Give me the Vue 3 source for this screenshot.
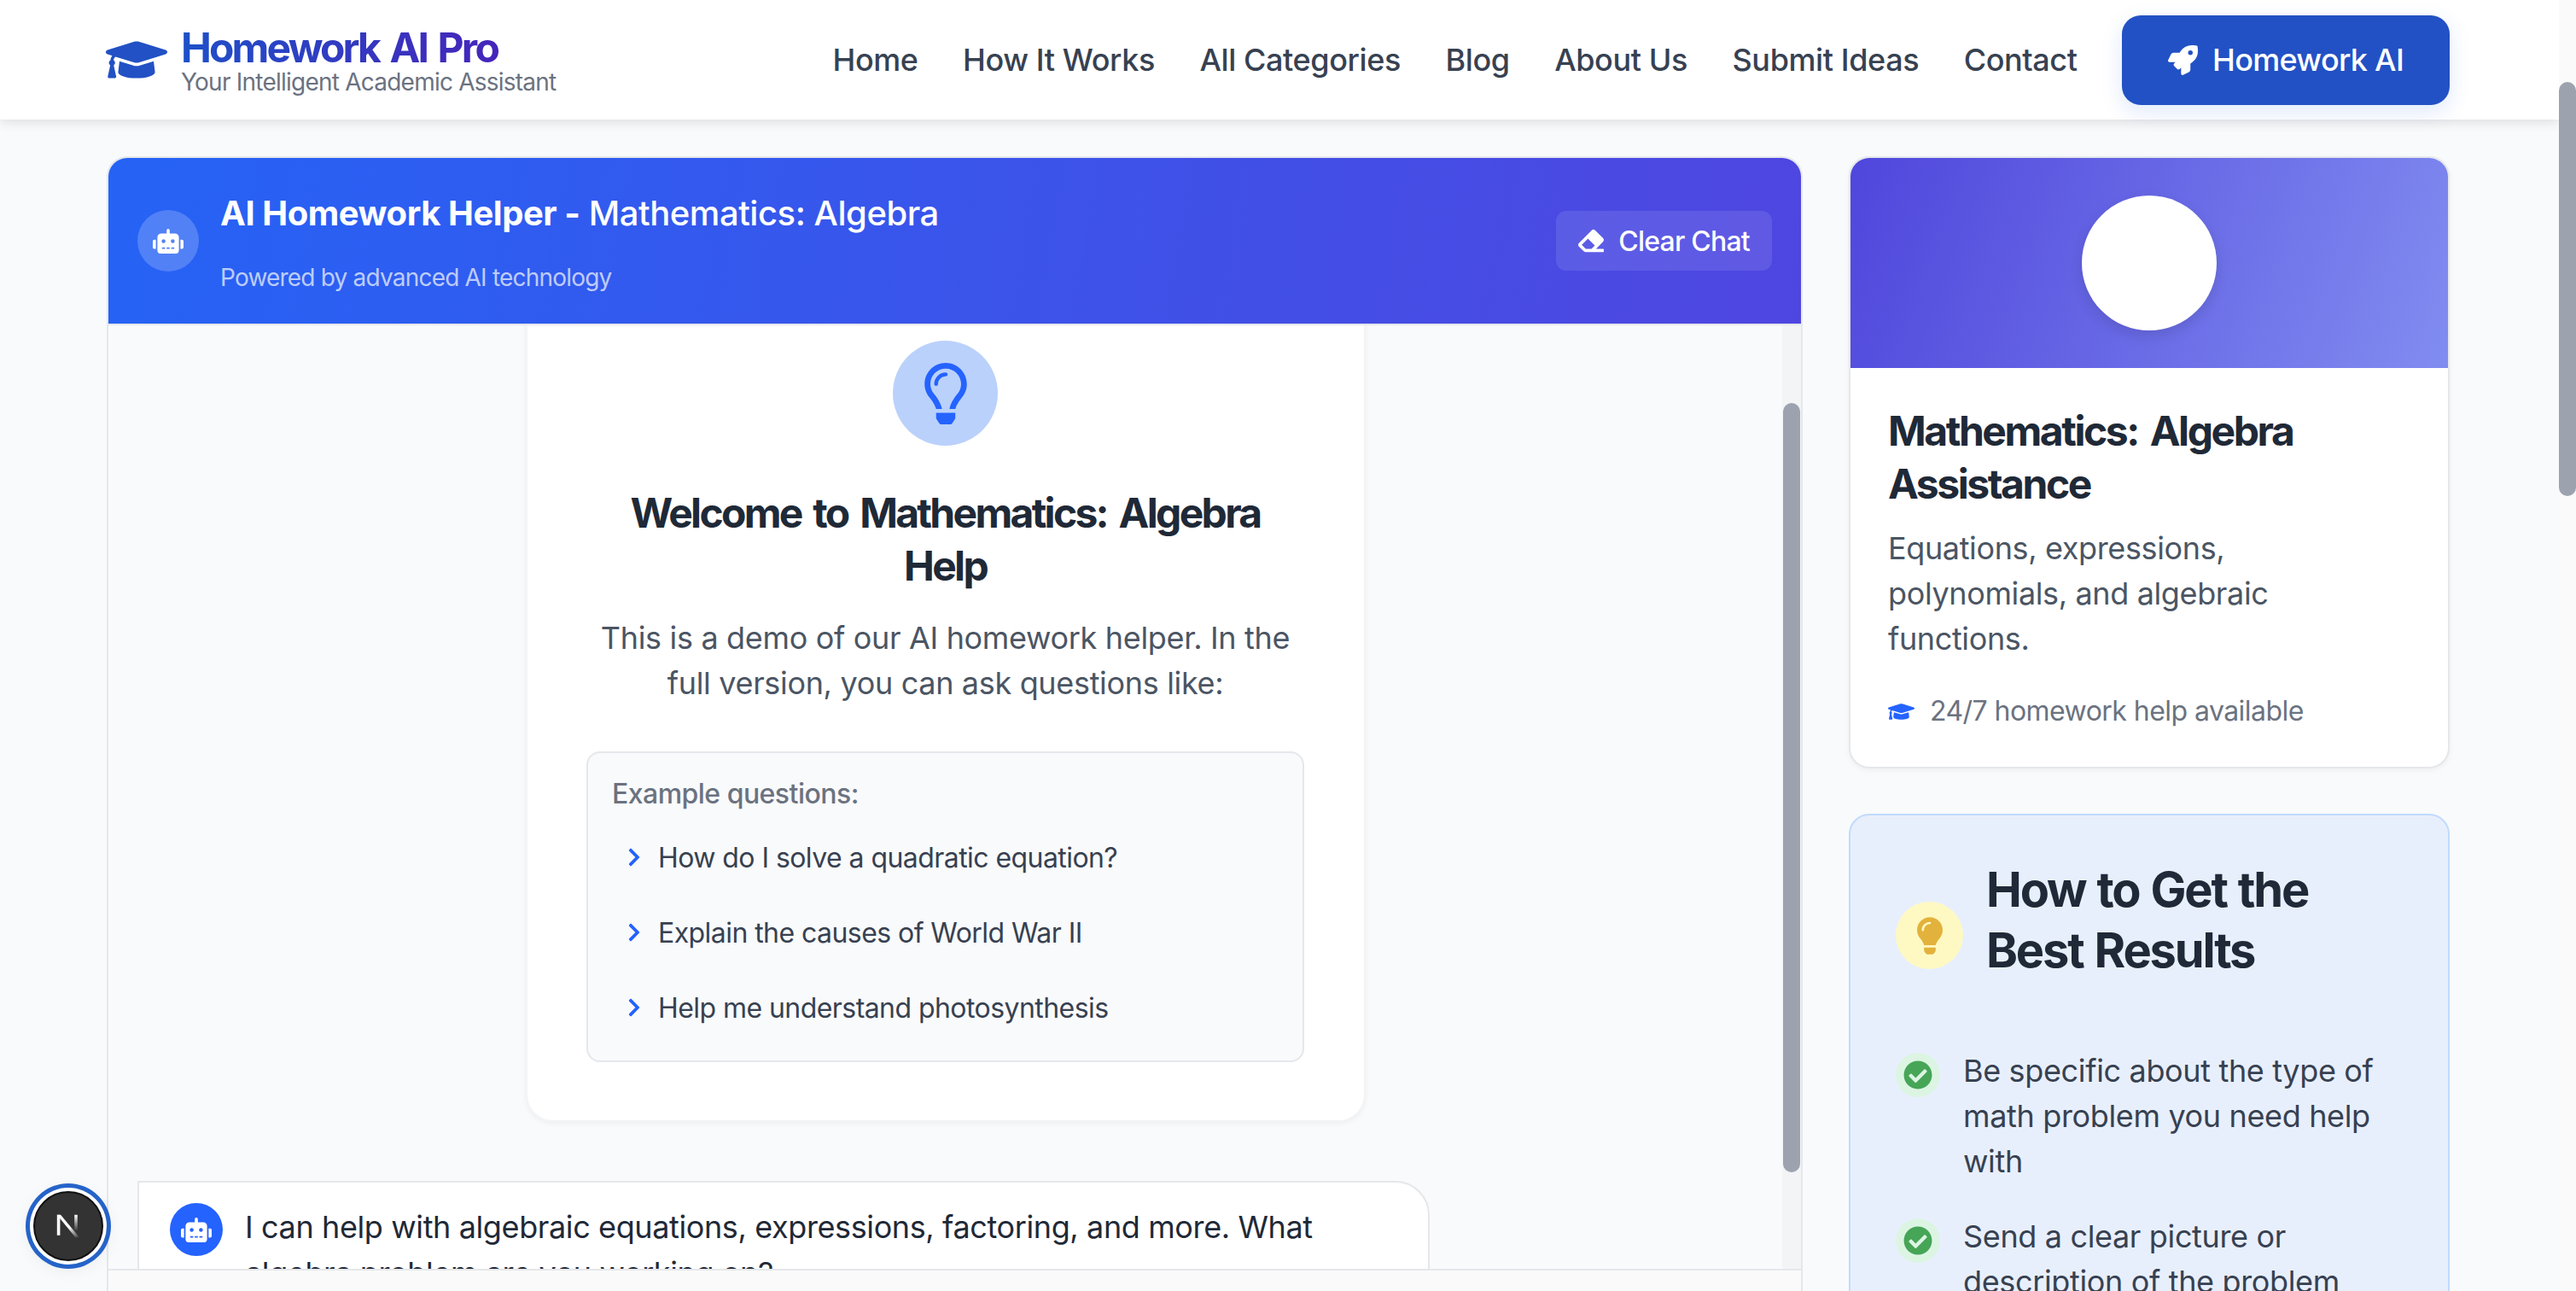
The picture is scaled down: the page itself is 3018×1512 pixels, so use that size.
<script setup>
// 页面静态数据
const navLinks = ['Home', 'How It Works', 'All Categories', 'Blog', 'About Us', 'Submit Ideas', 'Contact']

const examples = [
  'How do I solve a quadratic equation?',
  'Explain the causes of World War II',
  'Help me understand photosynthesis',
]

const tips = [
  'Be specific about the type of math problem you need help with',
  'Send a clear picture or description of the problem',
]

// ---- 图标路径 ----
const icons = {
  cap: 'M622.34 153.2L343.4 67.5c-15.2-4.67-31.6-4.67-46.79 0L17.66 153.2c-23.54 7.23-23.54 38.36 0 45.59l48.63 14.94c-10.67 13.19-17.23 29.28-17.88 46.9C38.78 266.15 32 276.11 32 288c0 10.78 5.68 19.85 13.86 25.65L20.33 428.53C18.11 438.52 25.71 448 35.94 448h56.11c10.24 0 17.84-9.48 15.62-19.47L82.14 313.65C90.32 307.85 96 298.78 96 288c0-11.57-6.47-21.25-15.66-26.87.76-15.02 8.44-28.3 20.69-36.72L296.6 284.5c9.06 2.78 26.44 6.25 46.79 0l278.95-85.7c23.55-7.24 23.55-38.36 0-45.6zM352.79 315.09c-28.53 8.76-52.84 3.92-65.59 0l-145.02-44.55L128 384c0 35.35 85.96 64 192 64s192-28.65 192-64l-14.18-113.47-145.03 44.56z',
  robot: 'M32,224H64V416H32A31.96166,31.96166,0,0,1,0,384V256A31.96166,31.96166,0,0,1,32,224Zm512-48V448a64.06328,64.06328,0,0,1-64,64H160a64.06328,64.06328,0,0,1-64-64V176a79.974,79.974,0,0,1,80-80H288V32a32,32,0,0,1,64,0V96H464A79.974,79.974,0,0,1,544,176ZM264,256a40,40,0,1,0-40,40A39.997,39.997,0,0,0,264,256Zm-8,128H192v32h64Zm96,0H288v32h64ZM456,256a40,40,0,1,0-40,40A39.997,39.997,0,0,0,456,256Zm-8,128H384v32h64ZM640,256V384a31.96166,31.96166,0,0,1-32,32H576V224h32A31.96166,31.96166,0,0,1,640,256Z',
  rocket: 'M505.12019,19.09375c-1.18945-5.53125-6.65819-11-12.207-12.1875C460.716,0,435.507,0,410.40747,0,307.17523,0,245.26909,55.20312,199.05238,128H94.83772c-16.34763.01562-35.55658,11.875-42.88664,26.48438L2.51562,253.29688A28.4,28.4,0,0,0,0,264a24.00867,24.00867,0,0,0,24.00582,24H127.81618l-22.47457,22.46875c-11.36521,11.36133-12.99607,32.25781,0,45.25L156.24582,406.625c11.15623,11.1875,32.15619,13.15625,45.27726,0l22.47457-22.46875V488a24.00867,24.00867,0,0,0,24.00581,24,28.55934,28.55934,0,0,0,10.707-2.51562l98.72834-49.39063c14.62888-7.29687,26.50776-26.5,26.50776-42.85937V312.79688c72.59753-46.3125,128.03493-108.40626,128.03493-211.09376C512.07526,76.5,512.07526,51.29688,505.12019,19.09375ZM384.04033,168A40,40,0,1,1,424.05,128,40.02322,40.02322,0,0,1,384.04033,168Z',
  eraser: 'M497.941 273.941c18.745-18.745 18.745-49.137 0-67.882l-160-160c-18.745-18.745-49.136-18.746-67.883 0l-256 256c-18.745 18.745-18.745 49.137 0 67.882l96 96A48.004 48.004 0 0 0 144 480h356c6.627 0 12-5.373 12-12v-40c0-6.627-5.373-12-12-12H355.883l142.058-142.059zm-302.627-62.627l137.373 137.373L265.373 416H150.628l-80-80 124.686-124.686z',
  bulbOutline: 'M176 80c-52.94 0-96 43.06-96 96 0 8.84 7.16 16 16 16s16-7.16 16-16c0-35.3 28.72-64 64-64 8.84 0 16-7.16 16-16s-7.16-16-16-16zM96.06 459.17c0 3.15.93 6.22 2.68 8.84l24.51 36.84c2.97 4.46 7.97 7.14 13.32 7.14h78.85c5.36 0 10.36-2.68 13.32-7.14l24.51-36.84c1.74-2.62 2.67-5.7 2.68-8.84l.05-43.18H96.02l.04 43.18zM176 0C73.72 0 0 82.97 0 176c0 44.37 16.45 84.85 43.56 115.78 16.64 18.99 42.74 58.8 52.42 92.16v.06h48v-.12c-.01-4.77-.72-9.51-2.15-14.07-5.59-17.81-22.82-64.77-62.17-109.67-20.54-23.43-31.52-53.15-31.61-84.14-.2-73.64 59.67-128 127.95-128 70.58 0 128 57.42 128 128 0 30.97-11.24 60.85-31.65 84.14-39.11 44.61-56.42 91.47-62.1 109.46a47.507 47.507 0 0 0-2.22 14.3v.1h48v-.05c9.68-33.37 35.78-73.18 52.42-92.16C335.55 260.85 352 220.37 352 176 352 78.8 273.2 0 176 0z',
  bulbSolid: 'M96.06 454.35c.01 6.29 1.87 12.45 5.36 17.69l17.09 25.69a31.99 31.99 0 0 0 26.64 14.28h61.71a31.99 31.99 0 0 0 26.64-14.28l17.09-25.69a31.989 31.989 0 0 0 5.36-17.69l.04-38.35H96.01l.05 38.35zM0 176c0 44.37 16.45 84.85 43.56 115.78 16.52 18.85 42.36 58.23 52.21 91.45.04.26.07.52.11.78h160.24c.04-.26.07-.51.11-.78 9.85-33.22 35.69-72.6 52.21-91.45C335.55 260.85 352 220.37 352 176 352 78.61 272.91-.3 175.45 0 73.44.31 0 82.97 0 176zm176-80c-44.11 0-80 35.89-80 80 0 8.84-7.16 16-16 16s-16-7.16-16-16c0-61.76 50.24-112 112-112 8.84 0 16 7.16 16 16s-7.16 16-16 16z',
  check: 'M504 256c0 136.967-111.033 248-248 248S8 392.967 8 256 119.033 8 256 8s248 111.033 248 248zM227.314 387.314l184-184c6.248-6.248 6.248-16.379 0-22.627l-22.627-22.627c-6.248-6.249-16.379-6.249-22.628 0L216 308.118l-70.059-70.059c-6.248-6.248-16.379-6.248-22.628 0l-22.627 22.627c-6.248 6.248-6.248 16.379 0 22.627l104 104c6.249 6.25 16.379 6.25 22.628.001z',
  chevron: 'M285.476 272.971L91.132 467.314c-9.373 9.373-24.569 9.373-33.941 0l-22.667-22.667c-9.357-9.357-9.375-24.522-.04-33.901L188.505 256 34.484 101.255c-9.335-9.379-9.317-24.544.04-33.901l22.667-22.667c9.373-9.373 24.569-9.373 33.941 0L285.475 239.03c9.373 9.372 9.373 24.568.001 33.941z',
}
</script>

<template>
  <div class="window">
    <div class="page">
      <!-- 顶部导航 -->
      <header class="topbar">
        <div class="brand">
          <svg class="brand-icon" viewBox="0 0 640 512"><path :d="icons.cap" /></svg>
          <div class="brand-text">
            <div class="brand-title">Homework AI Pro</div>
            <div class="brand-sub">Your Intelligent Academic Assistant</div>
          </div>
        </div>
        <nav class="nav">
          <a v-for="link in navLinks" :key="link" class="nav-link">{{ link }}</a>
          <button class="cta">
            <svg viewBox="0 0 512 512"><path :d="icons.rocket" /></svg>
            Homework AI
          </button>
        </nav>
      </header>

      <main class="main">
        <!-- 聊天区 -->
        <section class="chat">
          <div class="chat-head">
            <div class="head-left">
              <span class="head-avatar">
                <svg viewBox="0 0 640 512"><path :d="icons.robot" /></svg>
              </span>
              <div>
                <h1 class="head-title"><b>AI Homework Helper -</b> Mathematics: Algebra</h1>
                <p class="head-sub">Powered by advanced AI technology</p>
              </div>
            </div>
            <button class="clear">
              <svg viewBox="0 0 512 512"><path :d="icons.eraser" /></svg>
              Clear Chat
            </button>
          </div>

          <div class="chat-body">
            <div class="messages">
              <div class="welcome">
                <span class="welcome-bulb">
                  <svg viewBox="0 0 352 512"><path :d="icons.bulbOutline" /></svg>
                </span>
                <h2 class="welcome-title">Welcome to Mathematics: Algebra Help</h2>
                <p class="welcome-text">This is a demo of our AI homework helper. In the full version, you can ask questions like:</p>
                <div class="examples">
                  <p class="examples-label">Example questions:</p>
                  <div v-for="q in examples" :key="q" class="example">
                    <svg viewBox="0 0 320 512"><path :d="icons.chevron" /></svg>
                    <span>{{ q }}</span>
                  </div>
                </div>
              </div>

              <div class="bubble">
                <span class="bubble-avatar">
                  <svg viewBox="0 0 640 512"><path :d="icons.robot" /></svg>
                </span>
                <p>I can help with algebraic equations, expressions, factoring, and more. What algebra problem are you working on?</p>
              </div>
            </div>
            <div class="chat-scroll"><div class="chat-thumb"></div></div>
          </div>
          <div class="chat-foot"></div>
        </section>

        <!-- 右侧栏 -->
        <aside class="side">
          <div class="subject">
            <div class="subject-banner"><span class="subject-circle"></span></div>
            <div class="subject-body">
              <h2 class="subject-title">Mathematics: Algebra Assistance</h2>
              <p class="subject-text">Equations, expressions, polynomials, and algebraic functions.</p>
              <div class="subject-note">
                <svg viewBox="0 0 640 512"><path :d="icons.cap" /></svg>
                24/7 homework help available
              </div>
            </div>
          </div>

          <div class="tips">
            <div class="tips-head">
              <span class="tips-bulb">
                <svg viewBox="0 0 352 512"><path :d="icons.bulbSolid" /></svg>
              </span>
              <h2 class="tips-title">How to Get the Best Results</h2>
            </div>
            <div v-for="tip in tips" :key="tip" class="tip">
              <span class="tip-check">
                <svg viewBox="0 0 512 512"><path :d="icons.check" /></svg>
              </span>
              <p>{{ tip }}</p>
            </div>
          </div>
        </aside>
      </main>

      <!-- 开发工具角标 -->
      <div class="dev-badge">
        <svg viewBox="0 0 40 40">
          <defs>
            <linearGradient id="nFade" x1="0" y1="0" x2="1" y2="1">
              <stop offset="0.55" stop-color="#fff" />
              <stop offset="1" stop-color="#fff" stop-opacity="0" />
            </linearGradient>
            <linearGradient id="nBar" x1="0" y1="0" x2="0" y2="1">
              <stop offset="0" stop-color="#fff" />
              <stop offset="0.8" stop-color="#fff" stop-opacity="0" />
            </linearGradient>
          </defs>
          <rect x="9" y="9" width="3" height="20" fill="#fff" />
          <polygon points="9,9 12.5,9 31,31 27,31" fill="url(#nFade)" />
          <rect x="26" y="9" width="3" height="20" fill="url(#nBar)" />
        </svg>
      </div>
    </div>

    <div class="page-scroll"><div class="page-thumb"></div></div>
  </div>
</template>

<style>
html, body {
  margin: 0;
  height: 100%;
  overflow: hidden;
}
</style>

<style scoped>
.window {
  display: flex;
  height: 1512px;
  overflow: hidden;
  font-family: Inter, "Noto Sans", sans-serif;
  background: #f9fafb;
  color: #1f2937;
}

.page {
  position: relative;
  flex: 1;
  min-width: 0;
  overflow: hidden;
}

h1, h2, p {
  margin: 0;
}

svg {
  display: block;
  fill: currentColor;
}

button {
  border: none;
  font-family: inherit;
}

/* ---- 页面滚动条 ---- */
.page-scroll {
  width: 20px;
  background: #fafafa;
  padding-top: 96px;
  flex: none;
}

.page-thumb {
  height: 485px;
  background: #9ca3af;
  border-radius: 10px;
}

/* ---- 顶栏 ---- */
.topbar {
  position: relative;
  z-index: 2;
  height: 140px;
  box-sizing: border-box;
  padding: 0 128px 0 124px;
  display: flex;
  align-items: center;
  justify-content: space-between;
  background: #fff;
  box-shadow: 0 4px 12px rgba(0, 0, 0, 0.1);
}

.brand {
  display: flex;
  align-items: center;
  gap: 16px;
}

.brand-icon {
  width: 72px;
  height: 58px;
  color: #2251c5;
}

.brand-text {
  margin-bottom: 4px;
}

.brand-title {
  font-size: 48px;
  line-height: 58px;
  font-weight: 700;
  letter-spacing: -2.85px;
  word-spacing: 4px;
  background: linear-gradient(90deg, #1e50c8, #4c1db8);
  -webkit-background-clip: text;
  background-clip: text;
  color: transparent;
}

.brand-sub {
  margin-top: -3px;
  font-size: 28px;
  line-height: 28px;
  letter-spacing: -0.77px;
  color: #6b7280;
}

.nav {
  display: flex;
  align-items: center;
  gap: 52.5px;
}

.nav-link {
  font-size: 36px;
  font-weight: 500;
  letter-spacing: -0.4px;
  color: #374151;
}

.cta {
  display: flex;
  align-items: center;
  gap: 17px;
  height: 105px;
  padding: 0 54px;
  border-radius: 22px;
  background: #2251c5;
  color: #fff;
  font-size: 36px;
  font-weight: 500;
  letter-spacing: -0.7px;
  box-shadow: 0 8px 24px rgba(37, 99, 235, 0.15);
}

.cta svg {
  width: 35px;
  height: 35px;
}

/* ---- 主体两栏 ---- */
.main {
  display: grid;
  grid-template-columns: 1987px 704px;
  column-gap: 54px;
  padding: 43px 0 0 125px;
}

/* ---- 聊天卡片 ---- */
.chat {
  height: 1500px;
  box-sizing: border-box;
  display: flex;
  flex-direction: column;
  border: 2px solid #e5e7eb;
  border-radius: 24px;
  overflow: hidden;
  background: #f9fafb;
}

.chat-head {
  height: 196px;
  box-sizing: border-box;
  flex: none;
  padding: 0 34px;
  display: flex;
  align-items: center;
  justify-content: space-between;
  background: linear-gradient(100deg, #2563f5, #4f46e0);
  border-bottom: 2px solid #e5e7eb;
  color: #fff;
}

.head-left {
  display: flex;
  align-items: center;
  gap: 25px;
}

.head-avatar {
  width: 72px;
  height: 72px;
  border-radius: 50%;
  display: flex;
  align-items: center;
  justify-content: center;
  background: rgba(255, 255, 255, 0.2);
}

.head-avatar svg {
  width: 36px;
  height: 29px;
}

.head-title {
  font-size: 40px;
  line-height: 60px;
  font-weight: 500;
  letter-spacing: -0.45px;
}

.head-title b {
  font-weight: 700;
}

.head-sub {
  margin-top: 25px;
  font-size: 28px;
  line-height: 40px;
  letter-spacing: -0.8px;
  color: rgba(255, 255, 255, 0.7);
}

.clear {
  display: flex;
  align-items: center;
  gap: 17px;
  height: 70px;
  padding: 0 26px;
  border-radius: 12px;
  background: rgba(255, 255, 255, 0.1);
  color: #fff;
  font-size: 32px;
  font-weight: 500;
  letter-spacing: -0.77px;
}

.clear svg {
  width: 30px;
  height: 30px;
}

.chat-body {
  height: 1105px;
  flex: none;
  display: flex;
  overflow: hidden;
}

.messages {
  flex: 1;
  min-width: 0;
  margin-top: -33px;
  padding: 0 0 0 34px;
}

.chat-scroll {
  width: 22px;
  flex: none;
  padding-top: 91px;
  background: #f3f4f6;
}

.chat-thumb {
  width: 20px;
  margin-left: 1px;
  height: 901px;
  background: #9ca3af;
  border-radius: 10px;
}

.chat-foot {
  flex: 1;
  background: #fafafa;
  border-top: 2px solid #e5e7eb;
}

/* ---- 欢迎卡片 ---- */
.welcome {
  width: 984px;
  box-sizing: border-box;
  margin: 0 auto;
  position: relative;
  left: -17px;
  padding: 49px 70px 68px;
  display: flex;
  flex-direction: column;
  align-items: center;
  background: #fff;
  border: 2px solid #f3f4f6;
  border-radius: 32px;
  box-shadow: 0 2px 6px rgba(0, 0, 0, 0.05);
}

.welcome-bulb {
  width: 123px;
  height: 123px;
  border-radius: 50%;
  display: flex;
  align-items: center;
  justify-content: center;
  background: #bad1fb;
  color: #2563ff;
}

.welcome-bulb svg {
  width: 50px;
  height: 72px;
}

.welcome-title {
  margin-top: 48px;
  font-size: 48px;
  line-height: 62px;
  font-weight: 700;
  letter-spacing: -2.7px;
  word-spacing: 5px;
  text-align: center;
  color: #1f2937;
}

.welcome-text {
  margin-top: 27px;
  font-size: 36px;
  line-height: 53px;
  letter-spacing: -0.33px;
  text-align: center;
  color: #4b5563;
}

.examples {
  width: 841px;
  box-sizing: border-box;
  margin-top: 53px;
  padding: 28px 28px 18px;
  background: #f9fafb;
  border: 2px solid #e5e7eb;
  border-radius: 16px;
}

.examples-label {
  font-size: 32px;
  line-height: 40px;
  font-weight: 500;
  letter-spacing: -0.53px;
  color: #6b7280;
}

.example {
  height: 88px;
  display: flex;
  align-items: center;
  gap: 20px;
  font-size: 32px;
  letter-spacing: -0.56px;
  color: #374151;
  padding-left: 18px;
}

.examples-label + .example {
  margin-top: 10px;
}

.example svg {
  width: 16px;
  height: 24px;
  color: #2563ff;
  flex: none;
}

/* ---- 助手消息 ---- */
.bubble {
  width: 1514px;
  box-sizing: border-box;
  margin-top: 69px;
  padding: 24px 36px;
  display: flex;
  gap: 26px;
  background: #fff;
  border: 2px solid #e5e7eb;
  border-radius: 0 40px 40px 40px;
  font-size: 36px;
  line-height: 54px;
  letter-spacing: -0.385px;
  color: #1f2937;
}

.bubble p {
  flex: 1;
  margin-top: 1px;
}

.bubble-avatar {
  width: 62px;
  height: 62px;
  flex: none;
  border-radius: 50%;
  display: flex;
  align-items: center;
  justify-content: center;
  background: #2563ff;
  color: #fff;
}

.bubble-avatar svg {
  width: 36px;
  height: 29px;
}

/* ---- 右侧栏 ---- */
.side {
  display: flex;
  flex-direction: column;
  gap: 53px;
}

.subject {
  box-sizing: border-box;
  height: 717px;
  border: 2px solid #e5e7eb;
  border-radius: 24px;
  overflow: hidden;
  background: #fff;
  box-shadow: 0 2px 6px rgba(0, 0, 0, 0.05);
}

.subject-banner {
  height: 246px;
  display: flex;
  align-items: center;
  justify-content: center;
  background: linear-gradient(110deg, #4f46dc, #818cf0);
}

.subject-circle {
  width: 158px;
  height: 158px;
  border-radius: 50%;
  background: #fff;
  box-shadow: 0 6px 16px rgba(0, 0, 0, 0.12);
}

.subject-body {
  padding: 43px 44px 0;
}

.subject-title {
  font-size: 48px;
  line-height: 62px;
  font-weight: 700;
  letter-spacing: -2.45px;
  word-spacing: 5px;
  color: #1f2937;
}

.subject-text {
  margin-top: 18px;
  font-size: 36px;
  line-height: 53px;
  letter-spacing: -0.37px;
  color: #4b5563;
}

.subject-note {
  margin-top: 38px;
  display: flex;
  align-items: center;
  gap: 18px;
  font-size: 32px;
  line-height: 40px;
  letter-spacing: -0.55px;
  color: #6b7280;
}

.subject-note svg {
  width: 31px;
  height: 25px;
  color: #2563ff;
}

.tips {
  box-sizing: border-box;
  height: 900px;
  padding: 52px 53px;
  background: #e8effc;
  border: 2px solid #bfdbfe;
  border-radius: 24px;
}

.tips-head {
  display: flex;
  align-items: flex-start;
  gap: 27px;
  margin-bottom: 79px;
}

.tips-bulb {
  width: 79px;
  height: 79px;
  flex: none;
  margin-top: 49px;
  border-radius: 50%;
  display: flex;
  align-items: center;
  justify-content: center;
  background: #fef9c3;
  color: #e3b23c;
}

.tips-bulb svg {
  width: 30px;
  height: 44px;
}

.tips-title {
  font-size: 56px;
  line-height: 71px;
  font-weight: 700;
  letter-spacing: -2.2px;
  word-spacing: 2px;
  color: #1f2937;
}

.tip {
  display: flex;
  align-items: flex-start;
  gap: 27px;
  margin-bottom: 35px;
  font-size: 36px;
  line-height: 53px;
  letter-spacing: -0.35px;
  color: #374151;
}

.tip-check {
  width: 52px;
  height: 52px;
  flex: none;
  margin-top: 5px;
  border-radius: 50%;
  display: flex;
  align-items: center;
  justify-content: center;
  background: #dcf5e3;
  color: #46a557;
}

.tip-check svg {
  width: 34px;
  height: 34px;
}

/* ---- 左下角圆形角标 ---- */
.dev-badge {
  position: absolute;
  left: 39px;
  top: 1395px;
  z-index: 3;
  width: 82px;
  height: 82px;
  box-sizing: border-box;
  border-radius: 50%;
  display: flex;
  align-items: center;
  justify-content: center;
  background: #333;
  border: 2px solid #111;
  box-shadow: 0 0 0 4px #fff, 0 0 0 9px #2563c9, 0 4px 24px rgba(0, 0, 0, 0.12);
}

.dev-badge svg {
  width: 48px;
  height: 48px;
}
</style>
